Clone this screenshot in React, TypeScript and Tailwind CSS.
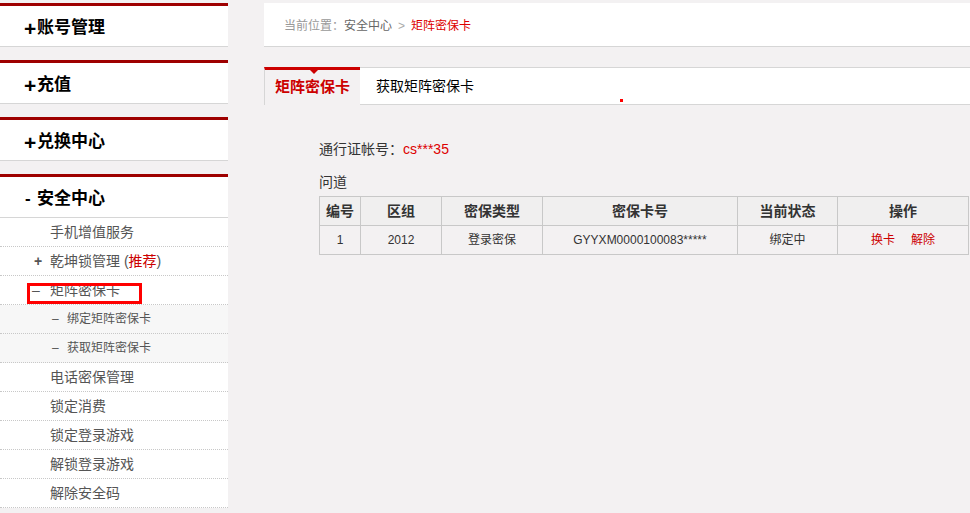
const font = { fontFamily: '"Liberation Sans", "Noto Sans CJK SC", sans-serif' };

function SideHeader({ sign, title }: { sign: string; title: string }) {
  return (
    <div className="border-t-[3px] border-[#9e0000] bg-white">
      <div className="flex h-[41px] items-center border-b border-[#d6d6d6] pl-[24px] pt-[4px] text-[17px] font-bold text-black">
        {sign === '+' ? (
          <span className="w-[13px] text-[21px] leading-none">+</span>
        ) : (
          <span className="w-[13px] pl-[1px]">-</span>
        )}
        <span>{title}</span>
      </div>
    </div>
  );
}

function Item({ children, sub = false }: { children: React.ReactNode; sub?: boolean }) {
  return (
    <div
      className={
        sub
          ? 'flex h-[29px] items-center border-b border-dotted border-[#c8c8c8] bg-[#f7f7f7] pl-[52px] text-[12px] text-[#555]'
          : 'flex h-[29px] items-center border-b border-dotted border-[#c8c8c8] text-[14px] text-[#555]'
      }
    >
      {children}
    </div>
  );
}

export default function App() {
  return (
    <div className="flex min-h-[513px] w-[970px] bg-[#f3f1f2] pt-[3px]" style={font}>
      <aside className="flex w-[228px] flex-col">
        <SideHeader sign="+" title="账号管理" />
        <div className="mt-[13px]">
          <SideHeader sign="+" title="充值" />
        </div>
        <div className="mt-[13px]">
          <SideHeader sign="+" title="兑换中心" />
        </div>
        <div className="mt-[13px] bg-white">
          <SideHeader sign="-" title="安全中心" />
          <Item>
            <span className="pl-[50px]">手机增值服务</span>
          </Item>
          <Item>
            <span className="w-[50px] pl-[34px] text-[14px] font-bold">+</span>
            <span>
              乾坤锁管理 (<span className="text-[#cc0000]">推荐</span>)
            </span>
          </Item>
          <div className="relative">
            <Item>
              <span className="w-[50px] pl-[32px]">–</span>
              <span>矩阵密保卡</span>
            </Item>
            <div className="absolute left-[27px] top-[7px] h-[21px] w-[115px] border-[3px] border-[#ff0000]" />
          </div>
          <Item sub>
            <span className="w-[15px]">–</span>
            <span>绑定矩阵密保卡</span>
          </Item>
          <Item sub>
            <span className="w-[15px]">–</span>
            <span>获取矩阵密保卡</span>
          </Item>
          {['电话密保管理', '锁定消费', '锁定登录游戏', '解锁登录游戏', '解除安全码'].map((t) => (
            <Item key={t}>
              <span className="pl-[50px]">{t}</span>
            </Item>
          ))}
        </div>
      </aside>

      <main className="ml-[36px] flex flex-1 flex-col">
        <div className="flex h-[44px] items-center border-b border-[#d6d6d6] bg-white pl-[20px] pt-[3px] text-[12px]">
          <span className="text-[#999]">当前位置：</span>
          <span className="text-[#666]">安全中心</span>
          <span className="px-[6px] text-[#aaa]">&gt;</span>
          <span className="text-[#dd0000]">矩阵密保卡</span>
        </div>

        <div className="relative mt-[20px] flex h-[38px]">
          <div className="relative flex w-[96px] items-center justify-center border-l border-t-[3px] border-l-[#d6d6d6] border-t-[#cc0000] text-[15px] font-bold text-[#cc0000]">
            <span className="absolute left-[45px] top-0 h-0 w-0 border-x-[4px] border-t-[4px] border-x-transparent border-t-[#cc0000]" />
            矩阵密保卡
          </div>
          <div className="flex flex-1 items-center border-y border-[#d6d6d6] bg-white pl-[16px] text-[14px] text-black">
            获取矩阵密保卡
          </div>
          <span className="absolute left-[356px] top-[32px] h-[3px] w-[3px] bg-[#ff0000]" />
        </div>

        <div className="pl-[55px] pr-[1px] pt-[36px]">
          <div className="text-[14px] leading-[16px] text-[#333]">
            通行证帐号：<span className="text-[#dd0000]">cs***35</span>
          </div>
          <div className="mt-[17px] text-[14px] leading-[16px] text-[#333]">问道</div>
          <table className="mt-[6px] w-[650px] border-collapse text-center text-[#333]">
            <thead>
              <tr className="h-[29px] bg-[#f0efef] text-[14px] font-bold">
                <th className="w-[41px] border border-[#c8c8c8]">编号</th>
                <th className="w-[81px] border border-[#c8c8c8]">区组</th>
                <th className="w-[101px] border border-[#c8c8c8]">密保类型</th>
                <th className="w-[195px] border border-[#c8c8c8]">密保卡号</th>
                <th className="w-[100px] border border-[#c8c8c8]">当前状态</th>
                <th className="border border-[#c8c8c8]">操作</th>
              </tr>
            </thead>
            <tbody>
              <tr className="h-[29px] text-[12px]">
                <td className="border border-[#c8c8c8]">1</td>
                <td className="border border-[#c8c8c8]">2012</td>
                <td className="border border-[#c8c8c8]">登录密保</td>
                <td className="border border-[#c8c8c8]">GYYXM0000100083*****</td>
                <td className="border border-[#c8c8c8]">绑定中</td>
                <td className="border border-[#c8c8c8] text-[#cc0000]">
                  <span className="mr-[16px]">换卡</span>
                  <span>解除</span>
                </td>
              </tr>
            </tbody>
          </table>
        </div>
      </main>
    </div>
  );
}
